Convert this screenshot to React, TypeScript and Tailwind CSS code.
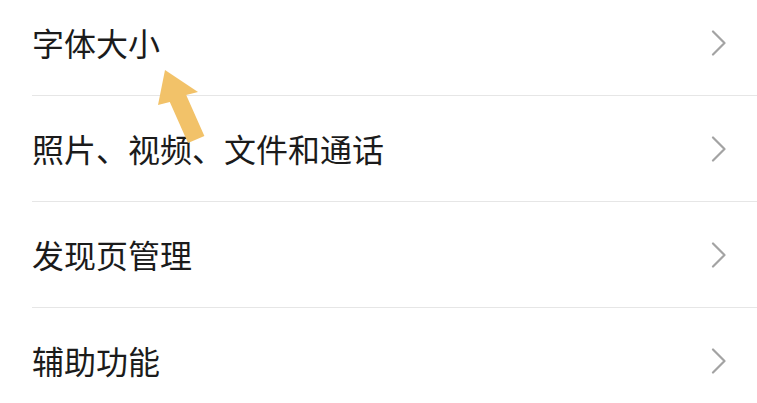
import React from "react";

const items = ["字体大小", "照片、视频、文件和通话", "发现页管理", "辅助功能"];

function Chevron() {
  return (
    <svg width="16" height="26" viewBox="0 0 16 26" fill="none" className="shrink-0">
      <path d="M2 1.5 L13.5 13 L2 24.5" stroke="#a3a3a3" strokeWidth="2.2" strokeLinecap="round" strokeLinejoin="round" />
    </svg>
  );
}

export default function App() {
  return (
    <div className="relative w-[757px] h-[403px] overflow-hidden bg-white" style={{ fontFamily: '"Noto Sans CJK SC", "Noto Sans", sans-serif' }}>
      <div className="-mt-[10px] pl-[32px]">
        {items.map((t) => (
          <div key={t} className="flex h-[106px] items-center justify-between border-b border-[#e6e6e6] pr-[30px]">
            <span className="pb-[2px] text-[32px] leading-none text-[#1b1b1b] [text-spacing-trim:space-all] [font-feature-settings:'fwid']">{t}</span>
            <Chevron />
          </div>
        ))}
      </div>
      <svg className="absolute left-0 top-0 pointer-events-none" width="757" height="403">
        <polygon
          points="165,70 198,92 186.2,94.9 204.4,136 188,143 169.8,102.1 158,105"
          fill="#F2C269"
        />
      </svg>
    </div>
  );
}
